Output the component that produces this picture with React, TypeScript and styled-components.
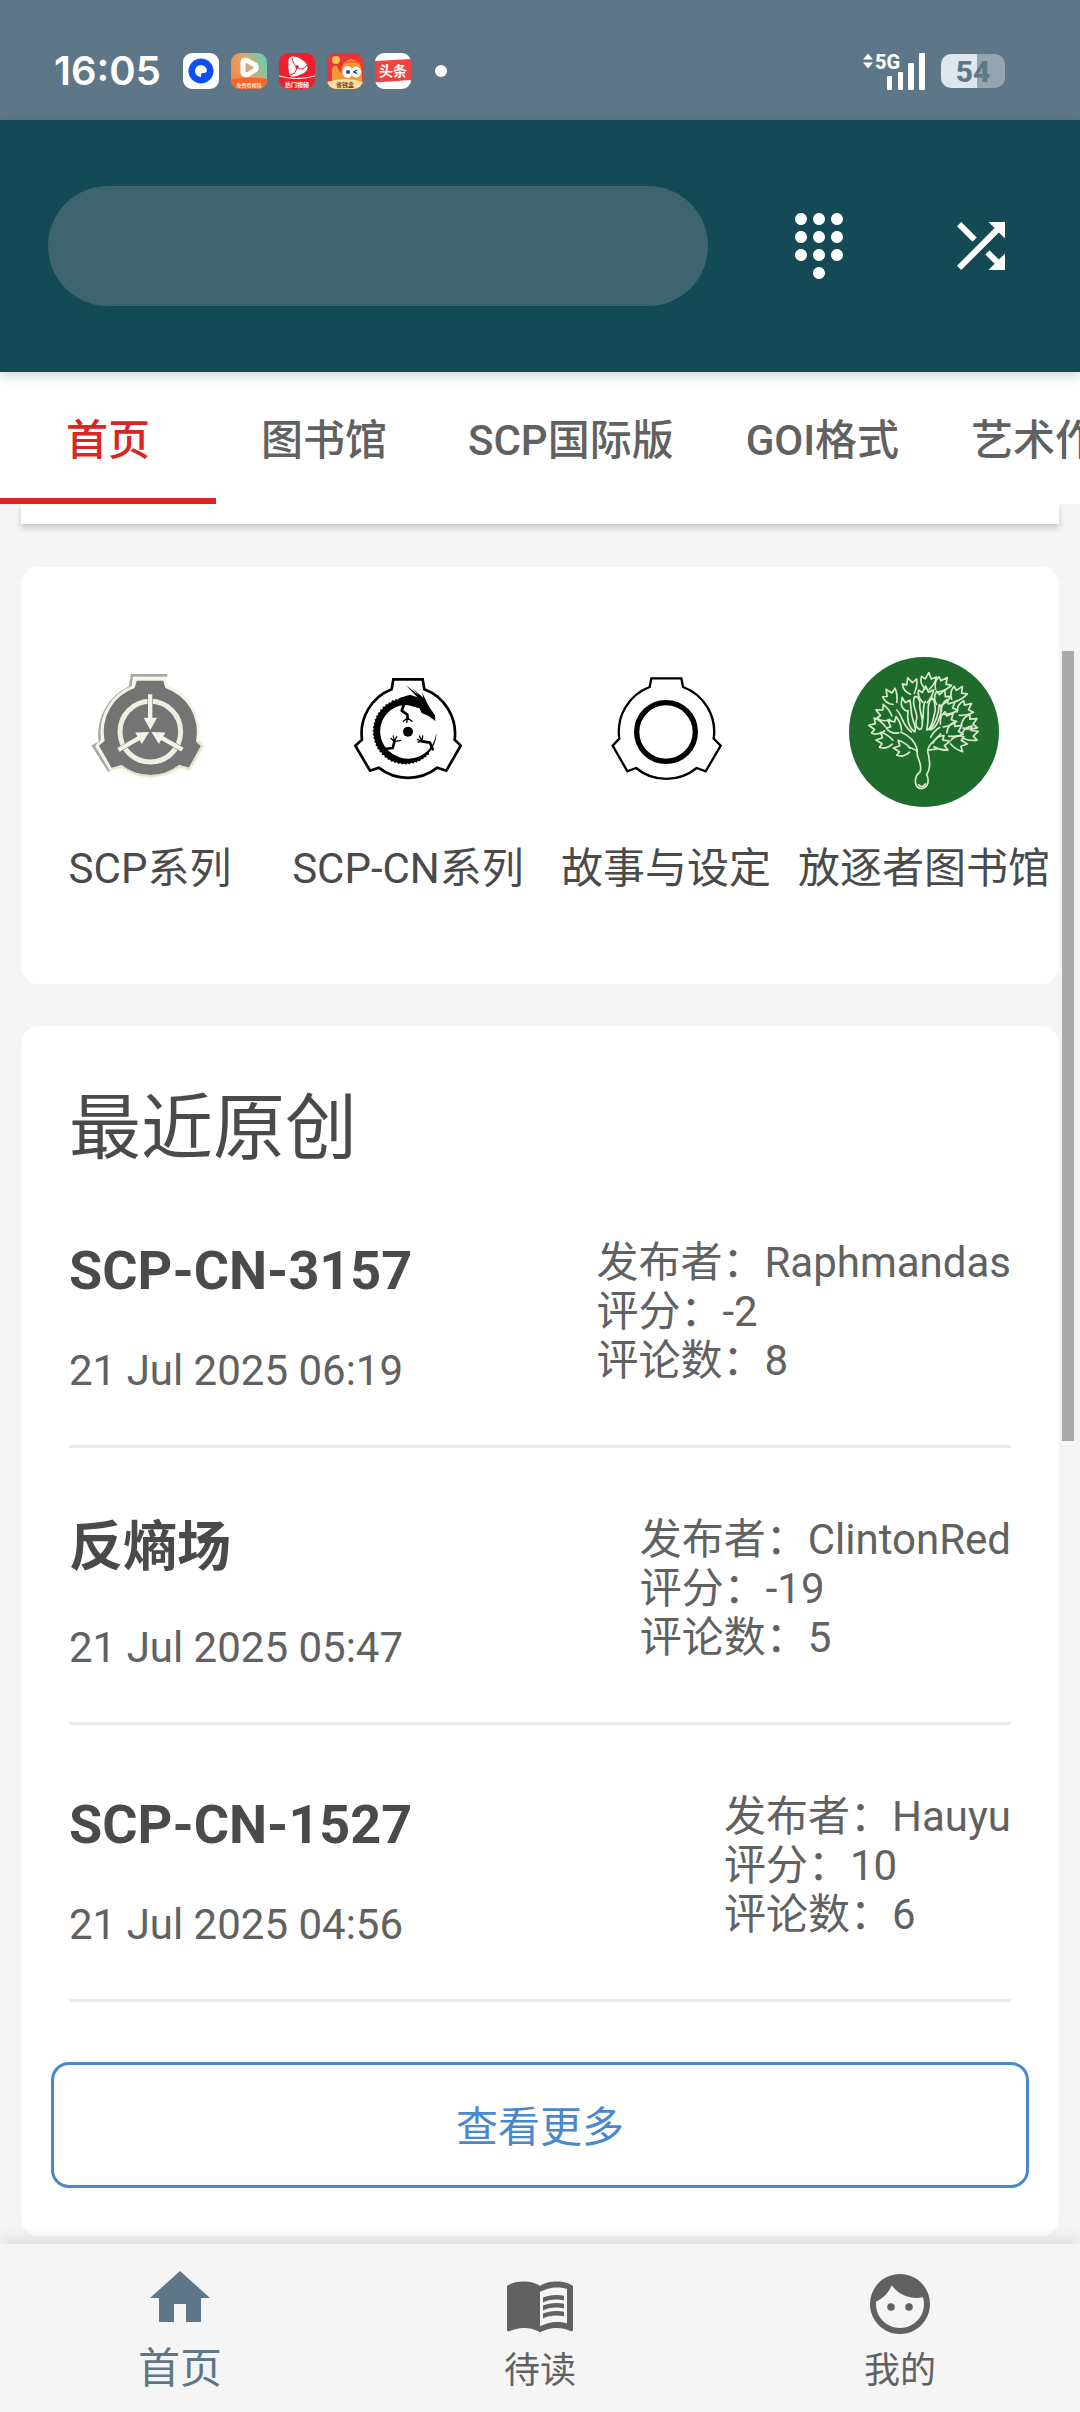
import React from 'react';
import styled, { createGlobalStyle } from 'styled-components';
import { MdDialpad, MdFace, MdHome, MdMenuBook, MdShuffle } from 'react-icons/md';

const GlobalStyle = createGlobalStyle`
  * { box-sizing: border-box; }
  body {
    margin: 0;
    background: #f5f5f5;
    font-family: Roboto, "Noto Sans CJK SC", sans-serif;
    font-size: 42px;
    color: #616161;
  }
  button, input { font: inherit; color: inherit; }
  button { border: 0; background: none; padding: 0; cursor: pointer; }
  h2, h3, p, ul, dl, dd, dt { margin: 0; padding: 0; }
`;

const Screen = styled.div`
  display: flex;
  flex-direction: column;
  height: 100vh;
  overflow: hidden;
`;

const StatusBar = styled.div`
  display: flex;
  align-items: center;
  flex: none;
  height: 120px;
  padding: 22px 75px 0 54px;
  background: #5d7788;
  color: #fff;
`;

const Clock = styled.span`
  font-family: Inter, Roboto, sans-serif;
  font-size: 40px;
  font-weight: 600;
  line-height: 48px;
`;

const Notifications = styled.div`
  display: flex;
  align-items: center;
  gap: 12px;
  margin-left: 22px;
  flex: 1;
  svg { display: block; width: 36px; height: 36px; }
`;

const MoreDot = styled.span`
  width: 12px;
  height: 12px;
  margin-left: 12px;
  border-radius: 50%;
  background: #fff;
`;

const SignalIcon = styled.svg`
  display: block;
  width: 64px;
  height: 40px;
  margin-right: 16px;
`;

const Battery = styled.span`
  display: flex;
  align-items: center;
  justify-content: center;
  width: 64px;
  height: 34px;
  border-radius: 10px;
  background: linear-gradient(to right, #dfe6ed 56%, #93a5b0 56%);
  color: #5d7788;
  font-size: 30px;
  font-weight: 800;
`;

const AppBar = styled.header`
  position: relative;
  z-index: 2;
  display: flex;
  align-items: center;
  flex: none;
  height: 252px;
  padding: 0 18px 0 48px;
  background: #144956;
  box-shadow: 0 3px 12px rgba(0, 0, 0, 0.2);
`;

const SearchField = styled.input`
  flex: 1;
  min-width: 0;
  height: 120px;
  margin-right: 30px;
  padding: 0 48px;
  border: 0;
  border-radius: 60px;
  outline: none;
  background: #3d646f;
  color: #fff;
`;

const IconButton = styled.button`
  display: grid;
  place-items: center;
  flex: none;
  width: 162px;
  height: 120px;
  color: #fff;
  svg { width: 72px; height: 72px; }
`;

const TabBar = styled.nav`
  display: flex;
  flex: none;
  height: 132px;
  overflow: hidden;
  background: #fff;
`;

const Tab = styled.button<{ $active?: boolean }>`
  flex: none;
  min-width: 216px;
  padding: 2px 36px 0;
  border-bottom: 6px solid ${(p) => (p.$active ? '#d92523' : 'transparent')};
  color: ${(p) => (p.$active ? '#d92523' : '#616161')};
  font-weight: 500;
  white-space: nowrap;
`;

const Content = styled.main`
  position: relative;
  flex: 1;
  min-height: 0;
  padding: 0 21px;
  overflow: hidden;
`;

const Banner = styled.section`
  height: 20px;
  margin-bottom: 43px;
  background: #fff;
  box-shadow: 0 4px 6px rgba(0, 0, 0, 0.18);
`;

const Card = styled.section`
  margin-bottom: 42px;
  border-radius: 18px;
  background: #fff;
`;

const Categories = styled(Card)`
  display: grid;
  grid-template-columns: repeat(4, 1fr);
  padding: 90px 6px 90px 0;
`;

const Category = styled.button`
  display: flex;
  flex-direction: column;
  align-items: center;
  gap: 37px;
  min-width: 0;
  color: #4a4a4a;
  line-height: 50px;
  white-space: nowrap;
  svg { display: block; width: 150px; height: 150px; }
`;

const Recent = styled(Card)`
  padding: 58px 0 48px;
`;

const Heading = styled.h2`
  padding: 0 48px;
  color: #4a4a4a;
  font-size: 72px;
  font-weight: 400;
  line-height: 90px;
`;

const List = styled.ul`
  margin-top: -3px;
  padding: 0 48px;
  list-style: none;
`;

const Item = styled.li`
  display: flex;
  justify-content: space-between;
  padding: 67px 0 50px;
  border-bottom: 3px solid #ebebeb;
`;

const Summary = styled.div`
  display: flex;
  flex-direction: column;
  gap: 42px;
`;

const ItemTitle = styled.h3`
  color: #4a4a4a;
  font-size: 54px;
  font-weight: 700;
  line-height: 66px;
`;

const DateText = styled.time`
  line-height: 49px;
`;

const Meta = styled.dl`
  line-height: 49px;
  div { display: flex; }
`;

const MoreButton = styled.button`
  display: block;
  width: calc(100% - 60px);
  height: 126px;
  margin: 60px 30px 0;
  padding-bottom: 3px;
  border: 3px solid #4a88cd;
  border-radius: 18px;
  color: #4a88cd;
`;

const ScrollThumb = styled.div`
  position: absolute;
  top: 147px;
  right: 6px;
  width: 12px;
  height: 790px;
  background: #aaa;
`;

const BottomNav = styled.nav`
  position: relative;
  display: grid;
  grid-template-columns: repeat(3, 1fr);
  flex: none;
  height: 168px;
  background: #f5f5f5;
  box-shadow: 0 -3px 18px rgba(0, 0, 0, 0.12);
`;

const NavItem = styled.button<{ $active?: boolean }>`
  display: flex;
  flex-direction: column;
  align-items: center;
  gap: ${(p) => (p.$active ? 11 : 7)}px;
  padding-top: ${(p) => (p.$active ? 18 : 24)}px;
  color: ${(p) => (p.$active ? '#5d7788' : '#616161')};
  font-size: ${(p) => (p.$active ? 42 : 36)}px;
  line-height: 48px;
  svg { width: 72px; height: 72px; }
`;

const BrowserIcon = () => (
  <svg viewBox="0 0 36 36">
    <rect width="36" height="36" rx="9" fill="#fff" />
    <circle cx="18" cy="18" r="12.5" fill="#0a50f5" />
    <path d="M18 12a6 6 0 1 0 0 12v-2.500q0-1.500 1.500-1.500h2q2-.5 2.500-2a6 6 0 0 0-6-6z" fill="#fff" />
  </svg>
);

const VideoIcon = () => (
  <svg viewBox="0 0 36 36">
    <defs>
      <linearGradient id="video" x1="0" y1="0.6" x2="1" y2="0.2">
        <stop offset="0" stopColor="#f58a45" />
        <stop offset="0.5" stopColor="#d8a878" />
        <stop offset="1" stopColor="#5fd0b0" />
      </linearGradient>
      <clipPath id="videoClip"><rect width="36" height="36" rx="9" /></clipPath>
    </defs>
    <g clipPath="url(#videoClip)">
      <rect width="36" height="36" fill="url(#video)" />
      <path d="M0 26q18-3 36 0v10H0z" fill="#f9642d" />
      <path d="M12 9q1-3 5-1l7 4q3 2.500 0 5l-7 4.500q-4 1-5-2z" fill="none" stroke="#fff" strokeWidth="5" strokeLinejoin="round" />
      <text x="18" y="34" textAnchor="middle" fontSize="5" fontWeight="700" fill="#ffe2c4">免费看视频</text>
    </g>
  </svg>
);

const HotVideoIcon = () => (
  <svg viewBox="0 0 36 36">
    <rect width="36" height="36" rx="9" fill="#f01f2b" />
    <path d="M9.500 8q0-5 5-4.500 4 0 8 3 6 3.500 6 8t-7 7q-6 3-10 1.500-2.500-2-2-15z" fill="#fff" />
    <path d="M13 5q2 8 5 9m10-2q-5 7-10 2m-7 8q6-1 7-8" fill="none" stroke="#d81c28" strokeWidth="1" />
    <circle cx="18" cy="14" r="1.700" fill="#d81c28" />
    <path d="M0 23q18 5 36 0" fill="none" stroke="#fff" strokeWidth="1" />
    <text x="18" y="34" textAnchor="middle" fontSize="6" fontWeight="700" fill="#fff">热门视频</text>
  </svg>
);

const MascotIcon = () => (
  <svg viewBox="0 0 36 36">
    <defs><clipPath id="mascotClip"><rect width="36" height="36" rx="9" /></clipPath></defs>
    <g clipPath="url(#mascotClip)">
      <rect width="36" height="36" fill="#e9343a" />
      <path d="M5 30V18q0-6 5-5l4 8q0-13 10-15 10 1 11 13v12H5z" fill="#f39a35" />
      <circle cx="9" cy="7" r="4" fill="#f8c255" />
      <path d="M16 11q9-3 18 0l-1-2q-8-3-16 0z" fill="#f3642c" />
      <ellipse cx="20.500" cy="19" rx="5" ry="6" fill="#fff" />
      <ellipse cx="29" cy="19" rx="5" ry="5.500" fill="#fff" />
      <circle cx="21" cy="19" r="2" fill="#2a4a78" />
      <path d="M30 17l-3 2 3 1.500" fill="none" stroke="#2a4a78" strokeWidth="1.500" />
      <path d="M0 29q18-6 36 0v7H0z" fill="#f8dfa0" />
      <text x="18" y="34" textAnchor="middle" fontSize="6" fontWeight="700" fill="#7a3a18">省钱盒</text>
    </g>
  </svg>
);

const HeadlinesIcon = () => (
  <svg viewBox="0 0 36 36">
    <rect width="36" height="36" rx="9" fill="#fff" />
    <path d="M0 8l36-2v21l-36 2.500z" fill="#ee4440" />
    <text x="18" y="23" textAnchor="middle" fontSize="14" fontWeight="700" fill="#fff">头条</text>
  </svg>
);

const Signal = () => (
  <SignalIcon viewBox="0 0 64 40" fill="#fff">
    <path d="M2 8.500l5-6 5 6zM2 11.500l5 6 5-6z" />
    <text x="14" y="18" fontSize="20" fontWeight="800">5G</text>
    <rect x="26" y="25" width="5" height="14" rx="1" />
    <rect x="37" y="21" width="5" height="18" rx="1" />
    <rect x="47" y="12" width="6" height="27" rx="1" />
    <rect x="58" y="2" width="6" height="37" rx="1" />
  </SignalIcon>
);

const arrow = 'M204 103h13v70h14l-20 37-20-37h13z';

const ScpLogo = () => (
  <svg viewBox="-15 -9 450 450">
    <path d="M60 246A156 156 0 0 1 150 82L156 46H262M58 248L40 258 88 334" fill="none" stroke="#a9a9a9" strokeWidth="8" />
    <path
      d="M170 62H250L256 84A138 138 0 0 1 348 242L365 257 327 324 298 315A140 140 0 0 1 124 315L95 324 57 257 74 242A138 138 0 0 1 164 84Z"
      fill="#747474" stroke="#f3f4e8" strokeWidth="18" paintOrder="stroke" strokeLinejoin="round"
    />
    <path d="M350 244L366 257 328 326 298 318A142 142 0 0 1 124 318L96 327" fill="none" stroke="#e1e4cc" strokeWidth="6" />
    <circle cx="211" cy="215" r="91" fill="none" stroke="#eeefe0" strokeWidth="15" />
    <g fill="#f3f3e8" stroke="#747474" strokeWidth="3" paintOrder="stroke">
      <path d={arrow} />
      <path d={arrow} transform="rotate(120 211 214)" />
      <path d={arrow} transform="rotate(240 211 214)" />
    </g>
  </svg>
);

// Scaly body of the dragon: a ring that thins out from the head to the tail.
const dragonBody = (() => {
  const cx = 200;
  const cy = 214;
  const point = (deg: number, r: number) => {
    const a = (deg * Math.PI) / 180;
    return `${(cx + r * Math.cos(a)).toFixed(1)} ${(cy + r * Math.sin(a)).toFixed(1)}`;
  };
  const outer: string[] = [];
  const inner: string[] = [];
  for (let i = 0; i <= 90; i += 1) {
    const deg = 5 + i * 3.2;
    const width = Math.min(19, 1 + i * 0.5);
    outer.push(point(deg, 89 + width / 2 + (i % 2 && i > 12 ? 4 : 0)));
    inner.unshift(point(deg, 89 - width / 2));
  }
  return `M${outer.join('L')}L${inner.join('L')}Z`;
})();

const ScpCnLogo = () => (
  <svg viewBox="-21 -9 450 450">
    <path
      d="M160 58H248L253 88A142 142 0 0 1 344 239L362 257 319 332 292 323A142 142 0 0 1 116 323L90 332 46 257 66 239A142 142 0 0 1 155 88Z"
      fill="none" stroke="#000" strokeWidth="8"
    />
    <path d={dragonBody} />
    <path d="M180 113L210 104 232 112 197 75 236 106 217 85 250 113 246 96 260 126 268 142 285 166 286 183 266 168 245 159 238 145 205 136 185 134Z" />
    <circle cx="204" cy="215" r="15" />
    <g fill="none" stroke="#000" strokeLinejoin="round" strokeLinecap="round">
      <path d="M192 132L185 152 202 164 203 176M134 267L158 264 163 246M278 268L270 248 246 244" strokeWidth="8" />
      <path d="M203 174L190 184M203 174L200 187M203 174L216 184M163 245L160 228M163 245L170 230M163 245L182 241M163 245L153 235M246 244L232 238M246 244L238 228M246 244L248 228M246 244L234 246" strokeWidth="4" />
    </g>
  </svg>
);

const TalesLogo = () => (
  <svg viewBox="93 51 450 450" fill="none" stroke="#000">
    <path
      d="M274 115H364L369 141A143 143 0 0 1 461 296L482 317 437 394 410 384A143 143 0 0 1 228 384L202 394 158 317 178 296A143 143 0 0 1 269 141Z"
      strokeWidth="7"
    />
    <circle cx="318" cy="276" r="88" strokeWidth="16" />
  </svg>
);

const leaves: [number, number, number][] = [
  [152, 138, -30], [211, 106, -14], [265, 92, 8], [308, 102, 40], [355, 130, 35], [376, 176, 55],
  [390, 218, 65], [392, 252, 75], [358, 280, 100], [306, 280, 80], [130, 190, -60], [110, 230, -75],
  [132, 272, -80], [184, 296, -80], [162, 226, -45], [257, 132, 4], [306, 142, 25], [328, 172, 50],
  [324, 208, 45], [346, 240, 60],
];

const LibraryLogo = () => (
  <svg viewBox="27 21 450 450">
    <circle cx="252" cy="246" r="225" fill="#1e6b2c" />
    <g fill="none" stroke="#d9ecd0" strokeWidth="5" strokeLinejoin="round" strokeLinecap="round">
      {leaves.map(([x, y, turn]) => (
        <path
          key={`${x}-${y}`}
          transform={`translate(${x} ${y}) rotate(${turn})`}
          d="M-6 26C-21 15-24 2-22-10L-10-4-2-24 8-6 23-14C21 4 16 14 6 26"
        />
      ))}
      <path d="M170 180C188 196 186 226 214 246M186 150C178 170 196 186 204 182 200 210 206 232 224 246 234 238 214 210 214 184L210 150 196 158 186 142Z" />
      <path d="M224 140C210 170 240 190 228 214 226 236 240 240 244 236 256 210 234 182 240 160 238 146 232 138 224 140ZM256 154C246 170 254 190 246 220M276 144C254 170 272 190 260 240 276 238 280 204 286 180 284 162 286 152 276 144ZM298 164C296 190 286 220 270 240 288 238 304 200 304 172ZM300 232C286 240 276 254 272 262" />
      <path d="M182 246C212 258 226 276 232 300 226 324 250 340 240 366 220 380 222 414 244 416 266 412 268 390 260 374 274 350 268 336 266 316 256 290 276 280 302 252" />
      <path d="M206 292C218 296 228 300 232 304M266 300C276 300 284 296 290 298M236 404C240 412 250 412 256 402" />
    </g>
  </svg>
);

const tabs = ['首页', '图书馆', 'SCP国际版', 'GOI格式', '艺术作品'];

const categories = [
  { name: 'SCP系列', Logo: ScpLogo },
  { name: 'SCP-CN系列', Logo: ScpCnLogo },
  { name: '故事与设定', Logo: TalesLogo },
  { name: '放逐者图书馆', Logo: LibraryLogo },
];

const entries = [
  { title: 'SCP-CN-3157', date: '21 Jul 2025 06:19', author: 'Raphmandas', score: -2, comments: 8 },
  { title: '反熵场', date: '21 Jul 2025 05:47', author: 'ClintonRed', score: -19, comments: 5 },
  { title: 'SCP-CN-1527', date: '21 Jul 2025 04:56', author: 'Hauyu', score: 10, comments: 6 },
];

const destinations = [
  { name: '首页', Icon: MdHome },
  { name: '待读', Icon: MdMenuBook },
  { name: '我的', Icon: MdFace },
];

export default function App() {
  return (
    <Screen lang="zh-CN">
      <GlobalStyle />
      <StatusBar>
        <Clock>16:05</Clock>
        <Notifications>
          <BrowserIcon />
          <VideoIcon />
          <HotVideoIcon />
          <MascotIcon />
          <HeadlinesIcon />
          <MoreDot />
        </Notifications>
        <Signal />
        <Battery>54</Battery>
      </StatusBar>
      <AppBar>
        <SearchField type="search" aria-label="搜索" />
        <IconButton aria-label="编号"><MdDialpad /></IconButton>
        <IconButton aria-label="随机"><MdShuffle /></IconButton>
      </AppBar>
      <TabBar>
        {tabs.map((name, i) => <Tab key={name} $active={i === 0}>{name}</Tab>)}
      </TabBar>
      <Content>
        <Banner />
        <Categories>
          {categories.map(({ name, Logo }) => (
            <Category key={name}><Logo />{name}</Category>
          ))}
        </Categories>
        <Recent>
          <Heading>最近原创</Heading>
          <List>
            {entries.map((e) => (
              <Item key={e.title}>
                <Summary>
                  <ItemTitle>{e.title}</ItemTitle>
                  <DateText>{e.date}</DateText>
                </Summary>
                <Meta>
                  <div><dt>发布者：</dt><dd>{e.author}</dd></div>
                  <div><dt>评分：</dt><dd>{e.score}</dd></div>
                  <div><dt>评论数：</dt><dd>{e.comments}</dd></div>
                </Meta>
              </Item>
            ))}
          </List>
          <MoreButton>查看更多</MoreButton>
        </Recent>
        <ScrollThumb />
      </Content>
      <BottomNav>
        {destinations.map(({ name, Icon }, i) => (
          <NavItem key={name} $active={i === 0}><Icon />{name}</NavItem>
        ))}
      </BottomNav>
    </Screen>
  );
}
